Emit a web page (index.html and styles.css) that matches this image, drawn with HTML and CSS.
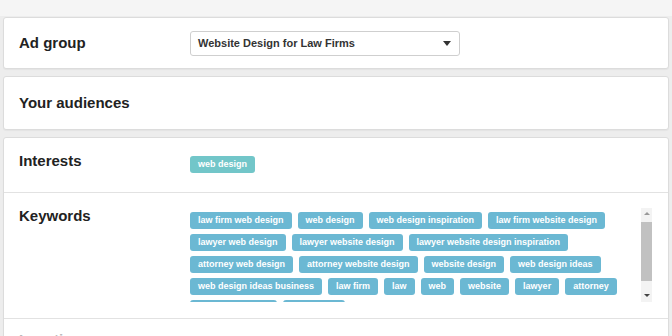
FILE: index.html
```html
<!DOCTYPE html>
<html>
<head>
<meta charset="utf-8">
<link rel="stylesheet" href="styles.css">
</head>
<body>
<div class="page">
  <div class="card">
    <div class="row row-center adgroup">
      <div class="label">Ad group</div>
      <div class="select">
        <span>Website Design for Law Firms</span>
        <span class="caret"></span>
      </div>
    </div>
  </div>
  <div class="card">
    <div class="row row-center audiences">
      <div class="label">Your audiences</div>
    </div>
  </div>
  <div class="card">
    <div class="row interests">
      <div class="label">Interests</div>
      <div class="tags single">
        <span class="tag tag-teal">web design</span>
      </div>
    </div>
    <div class="row keywords">
      <div class="label">Keywords</div>
      <div class="scrollbox">
        <div class="tags">
          <span class="tag">law firm web design</span>
          <span class="tag">web design</span>
          <span class="tag">web design inspiration</span>
          <span class="tag">law firm website design</span>
          <span class="tag">lawyer web design</span>
          <span class="tag">lawyer website design</span>
          <span class="tag">lawyer website design inspiration</span>
          <span class="tag">attorney web design</span>
          <span class="tag">attorney website design</span>
          <span class="tag">website design</span>
          <span class="tag">web design ideas</span>
          <span class="tag">web design ideas business</span>
          <span class="tag">law firm</span>
          <span class="tag">law</span>
          <span class="tag">web</span>
          <span class="tag">website</span>
          <span class="tag">lawyer</span>
          <span class="tag">attorney</span>
          <span class="tag">attorney website</span>
          <span class="tag">lawyer site</span>
        </div>
        <div class="scrollbar">
          <div class="arrow up"></div>
          <div class="thumb"></div>
          <div class="arrow down"></div>
        </div>
      </div>
    </div>
    <div class="row last">
      <div class="label faint">Locations</div>
    </div>
  </div>
</div>
</body>
</html>
```
FILE: styles.css
```css
html, body {
  margin: 0;
  padding: 0;
}
body {
  background: #ededed;
  font-family: "Liberation Sans", Arial, sans-serif;
  color: #222;
  overflow: hidden;
  height: 336px;
}
.page {
  padding: 17px 3px 0 3px;
  background: linear-gradient(#f5f5f5 0, #f5f5f5 16px, #ededed 16px);
}
.card {
  background: #fff;
  border: 1px solid #dcdcdc;
  border-radius: 3px;
  margin-bottom: 7px;
  box-shadow: 0 1px 1px rgba(0,0,0,0.04);
}
.row {
  display: flex;
  padding: 0 15px;
}
.row-center {
  align-items: center;
}
.label {
  width: 171px;
  flex: none;
  font-size: 15px;
  font-weight: bold;
  line-height: 18px;
  color: #222;
}
.adgroup {
  height: 50px;
}
.audiences {
  height: 52px;
}
.select {
  width: 253px;
  height: 23px;
  border: 1px solid #cfcfcf;
  border-radius: 3px;
  display: flex;
  align-items: center;
  justify-content: space-between;
  padding: 0 8px 0 7px;
  font-size: 11px;
  font-weight: bold;
  color: #333;
}
.caret {
  width: 0;
  height: 0;
  border-left: 4px solid transparent;
  border-right: 4px solid transparent;
  border-top: 5px solid #333;
}
.interests {
  padding-top: 14px;
  height: 40px;
  border-bottom: 1px solid #e2e2e2;
}
.tags.single {
  padding-top: 4px;
}
.tags {
  display: flex;
  flex-wrap: wrap;
  align-content: flex-start;
  gap: 5px 6px;
}
.tag {
  display: inline-block;
  height: 17px;
  line-height: 17px;
  padding: 0 8px;
  border-radius: 3px;
  background: #6bb8d3;
  color: #fff;
  font-size: 9px;
  font-weight: bold;
  white-space: nowrap;
}
.tag-teal {
  background: #72c6c9;
}
.keywords {
  padding-top: 14px;
  padding-bottom: 16px;
  border-bottom: 1px solid #e2e2e2;
}
.scrollbox {
  display: flex;
  height: 94px;
  margin-top: 1px;
}
.scrollbox .tags {
  width: 440px;
  height: 90px;
  padding-top: 4px;
  overflow: hidden;
}
.scrollbar {
  width: 11px;
  margin-left: 11px;
  background: #f3f3f3;
  display: flex;
  flex-direction: column;
  align-items: center;
}
.arrow {
  width: 0;
  height: 0;
  border-left: 3px solid transparent;
  border-right: 3px solid transparent;
}
.arrow.up {
  border-bottom: 3px solid #999;
  margin-top: 4px;
  margin-bottom: 7px;
}
.arrow.down {
  border-top: 3px solid #444;
  margin-top: 13px;
}
.thumb {
  width: 11px;
  height: 59px;
  background: #c1c1c1;
}
.last {
  height: 30px;
  padding-top: 12px;
}
.faint {
  color: #bbb;
}
```
